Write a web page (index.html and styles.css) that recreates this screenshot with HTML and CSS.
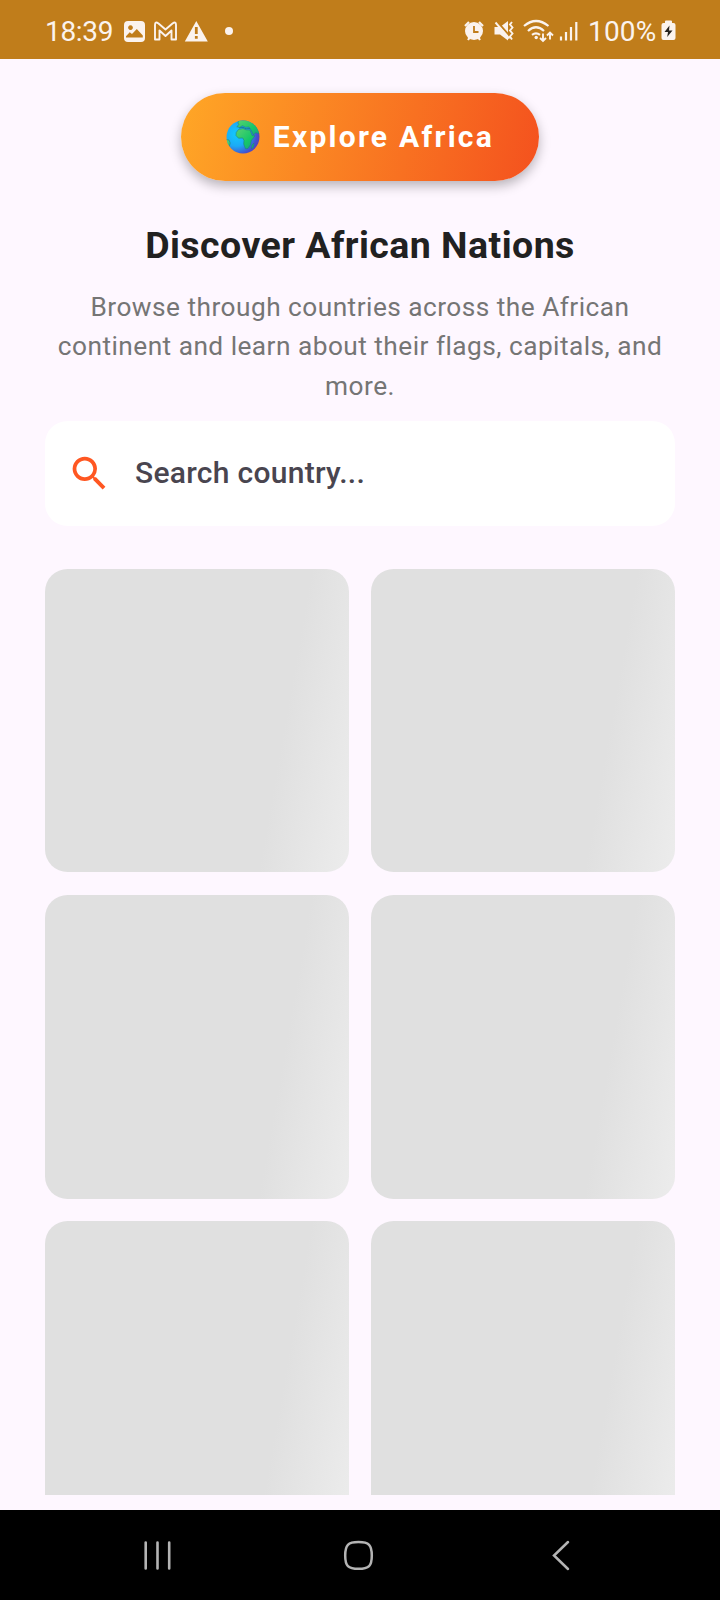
FILE: index.html
```html
<!DOCTYPE html>
<html lang="en">
<head>
<meta charset="utf-8">
<title>Explore Africa</title>
<link rel="stylesheet" href="styles.css">
</head>
<body>
<div class="screen">
  <header class="status">
    <span class="time">18:39</span>
    <svg class="icons-left" width="112" height="24" viewBox="124 19 112 24">
      <path fill-rule="evenodd" d="M128 21h13a4 4 0 0 1 4 4v13a4 4 0 0 1-4 4h-13a4 4 0 0 1-4-4v-13a4 4 0 0 1 4-4zM130.500 25.200a2.400 2.400 0 1 0 .01 0zM126 37.500h16.800v-2l-6-6.500-4.800 5-2.300-1.800-3.700 4z"/>
      <path d="M155 39.500V25q0-4 3.500-1.500l7 6 7-6q3.500-2.500 3.500 1.500v14.500h-4.500v-9l-6 5.500-6-5.500v9z" fill="none" stroke="#fbf3ee" stroke-width="1.900" stroke-linejoin="round"/>
      <path fill-rule="evenodd" d="M196.300 21l11.500 20.500h-23zM194.900 27v7h2.800v-7zM194.900 36v2.800h2.800v-2.800z"/>
      <circle cx="229" cy="31" r="4"/>
    </svg>
    <svg class="icons-right" width="116" height="26" viewBox="463 18 116 26">
      <circle cx="474" cy="31" r="9"/>
      <path d="M465 26l4-4M483 26l-4-4M468 40l2-3M480 40l-2-3" fill="none" stroke="#fbf3ee" stroke-width="2.200"/>
      <path d="M474 26v6h4.500" fill="none" stroke="#c07d1b" stroke-width="1.800"/>
      <path d="M494.500 27h5.500l8-6v19.500l-8-6h-5.500z"/>
      <path d="M496.500 21l15 17" stroke="#c07d1b" stroke-width="2"/>
      <path d="M495.500 22.500l14 16" stroke="#fbf3ee" stroke-width="1.900"/>
      <path d="M512 22l-2 2.500 2.500 3-2.500 3 2.500 3-2.500 3 2 3" fill="none" stroke="#fbf3ee" stroke-width="1.900"/>
      <path d="M524 26q12-10 24.500 0M528 31q8-7.500 16 0M532 34.800q4-3 8 0" fill="none" stroke="#fbf3ee" stroke-width="2.200"/>
      <circle cx="536.200" cy="37.500" r="1.700"/>
      <path d="M543 33.500v7M540 38l3 3 3-3M550 39.500v-7M547 35.500l3-3 3 3" fill="none" stroke="#fbf3ee" stroke-width="1.900"/>
      <path d="M561 36.500v4M566 32v8.500M571 27v13.500M576.300 22v18.500" fill="none" stroke="#fbf3ee" stroke-width="2.200"/>
    </svg>
    <span class="percent">100%</span>
    <svg class="battery" width="15" height="22" viewBox="0 0 15 22">
      <path d="M4 1.500Q4 .5 5 .5h5q1 0 1 1V3h1.500Q14.500 3 14.500 5v13q0 2-2 2h-10q-2 0-2-2V5q0-2 2-2H4z"/>
      <path d="M8.500 5.500L3.500 12H7l-.8 5L11.500 10.500H8z" fill="#26221e"/>
    </svg>
  </header>
  <main class="content">
    <div class="pill">
      <svg class="globe" width="34" height="34" viewBox="0 0 34 34">
        <defs>
          <radialGradient id="sea" cx=".3" cy=".42" r=".72">
            <stop offset="0" stop-color="#12caff"/><stop offset=".5" stop-color="#1caaf5"/><stop offset=".85" stop-color="#4353d2"/><stop offset="1" stop-color="#5640ba"/>
          </radialGradient>
          <linearGradient id="land" x1="0" y1="0" x2="1" y2="1">
            <stop offset="0" stop-color="#5bd071"/><stop offset=".6" stop-color="#15c768"/><stop offset="1" stop-color="#1a9f83"/>
          </linearGradient>
          <clipPath id="disc"><circle cx="17" cy="17" r="16.500"/></clipPath>
        </defs>
        <circle cx="17" cy="17" r="16.500" fill="url(#sea)"/>
        <g clip-path="url(#disc)" fill="url(#land)" stroke="#217f82" stroke-width=".6">
          <path d="M13 0l-1.200 3 1.200 1.500-2.200 2.200 2.700.8 3-1.800 3 1.600 3.500-.2 2 3 2.500 5 2-2.300 4.500 1V5L23 0z"/>
          <path d="M12.500 9.500l4.500-1 3 1.300 4 .2 2.200 5.500 2.800.3-3.800 5-.5 3.700-2.700 4-2.500.3-1.800-4.800.3-3.500-1.300-2.500-4.200.2-2.500-2.700.2-3z"/>
          <path d="M0 19.500l3 .5 1.200 3-1.200 4-3 0zM26 25l2-2-.5 4-2 2z"/>
        </g>
        <path d="M13 8l3.500-.8 3.500 1.600 4-.3" fill="none" stroke="#187e9c" stroke-width="1.100"/>
      </svg>
      <span class="pill-label">Explore Africa</span>
    </div>
    <h1 class="title">Discover African Nations</h1>
    <p class="intro">Browse through countries across the African<br>continent and learn about their flags, capitals, and<br>more.</p>
    <div class="search">
      <svg class="search-icon" width="45" height="45" viewBox="0 0 24 24"><path d="M15.500 14h-.79l-.28-.27A6.471 6.471 0 0 0 16 9.500 6.500 6.500 0 1 0 9.500 16c1.610 0 3.090-.59 4.230-1.570l.27.28v.79l5 4.990L20.490 19l-4.990-5zm-6 0C7.010 14 5 11.990 5 9.500S7.010 5 9.500 5 14 7.010 14 9.500 11.990 14 9.500 14z"/></svg>
      <span class="search-text">Search country...</span>
    </div>
    <div class="grid">
      <div class="card"></div><div class="card"></div>
      <div class="card"></div><div class="card"></div>
      <div class="card"></div><div class="card"></div>
    </div>
  </main>
  <nav class="navbar">
    <svg width="720" height="90" viewBox="0 0 720 90">
      <path d="M145.700 32.500v26M157.500 32.500v26M169.200 32.500v26" stroke-width="2.600"/>
      <path d="M358.500 32c10.500 0 13.300 3 13.300 13.500s-2.800 13.300-13.300 13.300-13.300-2.800-13.300-13.300 2.800-13.500 13.300-13.500z"/>
      <path d="M568 32l-14 13.500 14 13.500"/>
    </svg>
  </nav>
</div>
</body>
</html>
```

FILE: styles.css
```css
* { box-sizing: border-box; }
body { margin: 0; font-family: Roboto, "Liberation Sans", sans-serif; }
svg { display: block; flex: none; }
.screen { width: 720px; height: 1600px; display: flex; flex-direction: column; background: #fef7ff; overflow: hidden; }
.status { height: 59px; flex: none; display: flex; align-items: center; padding: 3px 44px 0 45px; background: #c07d1b; color: #fbf3ee; fill: #fbf3ee; font-size: 28px; line-height: 32px; white-space: nowrap; }
.time { width: 79px; letter-spacing: -.3px; padding-top: 2px; }
.icons-right { margin-left: auto; }
.percent { width: 72px; margin-left: 9px; padding-top: 2px; letter-spacing: .2px; }
.battery { margin-left: 1px; }
.content { flex: 1; min-height: 0; display: flex; flex-direction: column; padding: 33.500px 45px 15px; }
.pill { width: 358.5px; height: 88px; flex: none; align-self: center; display: flex; align-items: center; gap: 12.5px; padding-left: 45.5px; border-radius: 44px; background: linear-gradient(103.8deg, #ffa726, #f4511e); box-shadow: 0 5px 12px rgba(0, 0, 0, .28); }
.pill-label { color: #fff; font-size: 30px; font-weight: 700; line-height: 36px; letter-spacing: 2.25px; white-space: nowrap; }
.title { margin: 42.500px 0 0; font-size: 37.5px; line-height: 44px; font-weight: 700; letter-spacing: .45px; text-align: center; color: #212121; white-space: nowrap; }
.intro { margin: 21px 0 0; font-size: 26.25px; line-height: 39.375px; letter-spacing: .47px; text-align: center; color: #757575; white-space: nowrap; }
.search { height: 105px; flex: none; margin-top: 14.500px; display: flex; align-items: center; gap: 23px; padding: 0 22px; border-radius: 22.5px; background: #fff; }
.search-icon { fill: #ff5722; }
.search-text { font-size: 30px; line-height: 36px; padding-bottom: 1px; font-weight: 500; letter-spacing: .28px; color: #49454f; white-space: nowrap; }
.grid { flex: 1; min-height: 0; margin-top: 43px; display: grid; grid-template-columns: 1fr 1fr; grid-auto-rows: 303.75px; gap: 22.5px; overflow: hidden; }
.card { border-radius: 22.5px; background: linear-gradient(100deg, #e0e0e0 74.7%, #eeeeee 104%); }
.navbar { height: 90px; flex: none; background: #000; }
.navbar svg { fill: none; stroke: #b4b4b4; stroke-width: 2.500; stroke-linecap: round; }
```
